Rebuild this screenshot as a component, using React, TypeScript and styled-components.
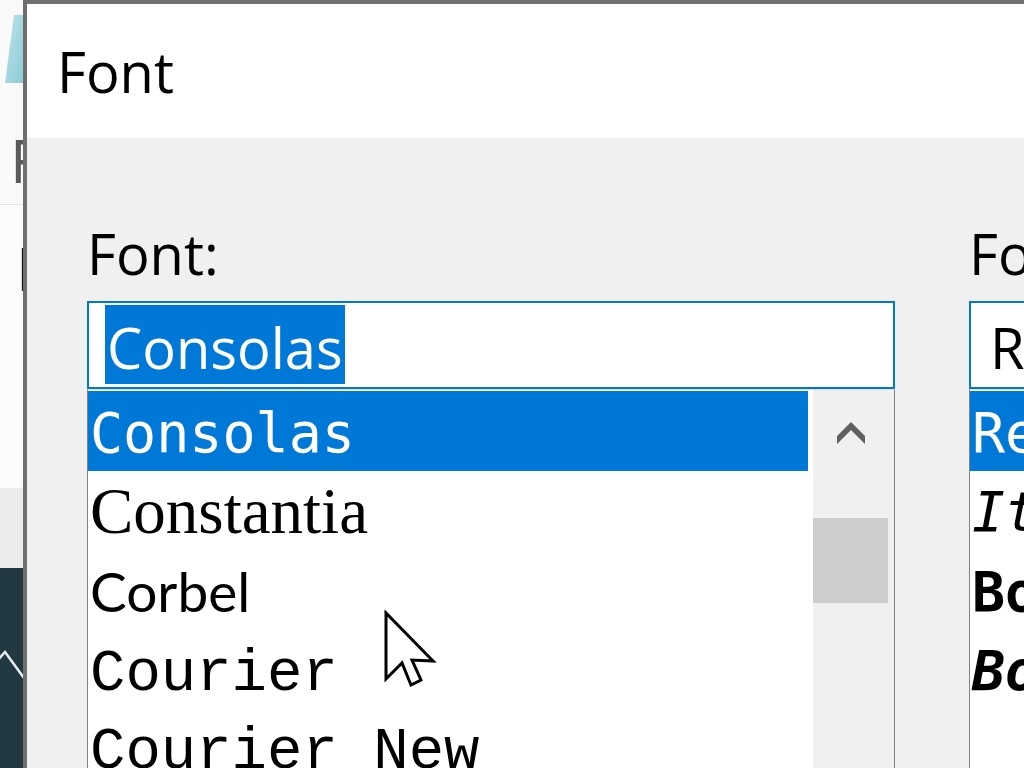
import styled, { createGlobalStyle } from "styled-components";

const GlobalStyle = createGlobalStyle`
    html, body {
        margin: 0;
        padding: 0;
        overflow: hidden;
        background: #ffffff;
    }
`;

const ui = `"Open Sans", "Noto Sans", sans-serif`;
const blue = "#0078d7";

interface FontRow {
    name: string;
    family: string;
    size: number;
    nudge?: number;
    italic?: boolean;
    bold?: boolean;
}

const fonts: FontRow[] = [
    { name: "Consolas", family: `"DejaVu Sans Mono", monospace`, size: 55, nudge: 2 },
    { name: "Constantia", family: `"Liberation Serif", serif`, size: 65 },
    { name: "Corbel", family: `Lato, sans-serif`, size: 55 },
    { name: "Courier", family: `"Liberation Mono", monospace`, size: 59, nudge: 4 },
    { name: "Courier New", family: `"Liberation Mono", monospace`, size: 59, nudge: 2 },
];

const styles: FontRow[] = [
    { name: "Regular", family: `"DejaVu Sans Mono", monospace`, size: 55, nudge: 2 },
    { name: "Italic", family: `"DejaVu Sans Mono", monospace`, size: 55, nudge: 1, italic: true },
    { name: "Bold", family: `"DejaVu Sans Mono", monospace`, size: 55, nudge: 1, bold: true },
    { name: "Bold Italic", family: `"DejaVu Sans Mono", monospace`, size: 55, nudge: 0, bold: true, italic: true },
];

const App = () => {
    return (
        <Screen>
            <GlobalStyle />
            <BackStrip>
                <TopPane>
                    <svg width="23" height="68" viewBox="0 0 23 68">
                        <defs>
                            <linearGradient id="teal" x1="0" y1="0" x2="1" y2="1">
                                <stop offset="0" stopColor="#bfe4ea" />
                                <stop offset="1" stopColor="#8ccbd6" />
                            </linearGradient>
                        </defs>
                        <path d="M14 0 L23 0 L23 68 L5 68 Z" fill="url(#teal)" />
                    </svg>
                    <BackLetter $color="#5a5a5a" $offset={47} $left={10}>F</BackLetter>
                </TopPane>
                <MidPane>
                    <BackLetter $color="#111" $offset={32} $left={16}>D</BackLetter>
                </MidPane>
                <GreyPane />
                <DarkPane>
                    <svg width="23" height="120" viewBox="0 0 23 120">
                        <polyline points="-2,92 5,84 24,110" fill="none" stroke="#e8eef0" strokeWidth="2.5" />
                    </svg>
                </DarkPane>
            </BackStrip>

            <Dialog>
                <TitleBar>Font</TitleBar>
                <Body>
                    <Column $width={808}>
                        <Label>Font:</Label>
                        <Input>
                            <Selection>Consolas</Selection>
                        </Input>
                        <List>
                            <Rows>
                                {fonts.map((f, i) => (
                                    <Row
                                        key={f.name}
                                        $selected={i === 0}
                                        $family={f.family}
                                        $size={f.size}
                                        $nudge={f.nudge ?? 0}
                                    >
                                        {f.name}
                                    </Row>
                                ))}
                            </Rows>
                            <Scrollbar>
                                <ArrowButton>
                                    <svg width="28" height="22" viewBox="0 0 28 22">
                                        <polygon
                                            points="14,0 28,14 28,22 14,8 0,22 0,14"
                                            fill="#606060"
                                        />
                                    </svg>
                                </ArrowButton>
                                <Thumb />
                            </Scrollbar>
                        </List>
                    </Column>
                    <Column $width={420}>
                        <Label>Font style:</Label>
                        <Input>
                            <PlainValue>Regular</PlainValue>
                        </Input>
                        <List>
                            <Rows>
                                {styles.map((s, i) => (
                                    <Row
                                        key={s.name}
                                        $selected={i === 0}
                                        $family={s.family}
                                        $size={s.size}
                                        $nudge={s.nudge ?? 0}
                                        $italic={s.italic}
                                        $bold={s.bold}
                                    >
                                        {s.name}
                                    </Row>
                                ))}
                            </Rows>
                        </List>
                    </Column>
                </Body>
            </Dialog>

            <Cursor width="56" height="82" viewBox="-3 -3 56 82">
                <polygon
                    points="0,0 0,66 16,50 25,72 35,67 26,47 47,48"
                    fill="#ffffff"
                    stroke="#000000"
                    strokeWidth="3"
                    strokeLinejoin="miter"
                />
            </Cursor>
        </Screen>
    );
};

export default App;

const Screen = styled.div`
    position: relative;
    display: flex;
    width: 1024px;
    height: 768px;
    overflow: hidden;
    font-family: ${ui};
`;

const BackStrip = styled.div`
    width: 23px;
    flex-shrink: 0;
    display: flex;
    flex-direction: column;
    overflow: hidden;
`;

const TopPane = styled.div`
    height: 205px;
    flex-shrink: 0;
    background: #fafafa;
    border-bottom: 1px solid #e2e2e2;
    padding-top: 15px;
    box-sizing: border-box;
    overflow: hidden;

    svg {
        display: block;
    }
`;

const BackLetter = styled.div<{ $color: string; $offset: number; $left: number }>`
    font-family: ${ui};
    font-size: 60px;
    line-height: 60px;
    color: ${({ $color }) => $color};
    margin-top: ${({ $offset }) => $offset}px;
    margin-left: ${({ $left }) => $left}px;
    white-space: nowrap;
`;

const MidPane = styled.div`
    height: 283px;
    flex-shrink: 0;
    background: #fbfbfb;
    overflow: hidden;
    padding-top: 1px;
    box-sizing: border-box;
`;

const GreyPane = styled.div`
    height: 80px;
    flex-shrink: 0;
    background: #ebebeb;
`;

const DarkPane = styled.div`
    flex: 1;
    background: #233941;

    svg {
        display: block;
    }
`;

const Dialog = styled.div`
    width: 1300px;
    flex-shrink: 0;
    display: flex;
    flex-direction: column;
    border-top: 4px solid #6f6f6f;
    border-left: 4px solid #6f6f6f;
    background: #f0f0f0;
`;

const TitleBar = styled.div`
    height: 134px;
    flex-shrink: 0;
    box-sizing: border-box;
    background: #ffffff;
    padding: 39px 0 0 30px;
    font-size: 56px;
    line-height: 57px;
    color: #000;
`;

const Body = styled.div`
    flex: 1;
    display: flex;
    gap: 74px;
    padding: 77px 0 0 60px;
    min-height: 0;
`;

const Column = styled.div<{ $width: number }>`
    width: ${({ $width }) => $width}px;
    flex-shrink: 0;
    display: flex;
    flex-direction: column;
    min-height: 0;
`;

const Label = styled.div`
    font-size: 56px;
    line-height: 76px;
    height: 76px;
    margin-bottom: 10px;
    color: #000;
    white-space: nowrap;
`;

const Input = styled.div`
    height: 88px;
    flex-shrink: 0;
    box-sizing: border-box;
    border: 2px solid ${blue};
    background: #ffffff;
    padding: 2px 0 0 16px;
    white-space: nowrap;
    overflow: hidden;
`;

const Selection = styled.span`
    display: inline-block;
    vertical-align: top;
    height: 79px;
    padding: 0 2px;
    background: ${blue};
    color: #ffffff;
    font-size: 56px;
    line-height: 84px;
`;

const PlainValue = styled.span`
    display: inline-block;
    vertical-align: top;
    height: 79px;
    padding: 0 3px;
    color: #000;
    font-size: 56px;
    line-height: 84px;
`;

const List = styled.div`
    flex: 1;
    min-height: 0;
    display: flex;
    border: 1px solid #828282;
    border-top-color: #dcdcdc;
    border-bottom: none;
    background: #ffffff;
    overflow: hidden;
`;

const Rows = styled.div`
    width: 720px;
    flex-shrink: 0;
    padding-top: 1px;
`;

const Row = styled.div<{
    $selected: boolean;
    $family: string;
    $size: number;
    $nudge: number;
    $italic?: boolean;
    $bold?: boolean;
}>`
    height: 80px;
    box-sizing: border-box;
    padding: ${({ $nudge }) => $nudge}px 0 0 2px;
    white-space: nowrap;
    font-family: ${({ $family }) => $family};
    font-size: ${({ $size }) => $size}px;
    line-height: 80px;
    font-style: ${({ $italic }) => ($italic ? "italic" : "normal")};
    font-weight: ${({ $bold }) => ($bold ? 700 : 400)};
    background: ${({ $selected }) => ($selected ? blue : "transparent")};
    color: ${({ $selected }) => ($selected ? "#ffffff" : "#000000")};
`;

const Scrollbar = styled.div`
    width: 81px;
    margin-left: 5px;
    flex-shrink: 0;
    background: #f0f0f0;
    padding-right: 6px;
    box-sizing: border-box;
    display: flex;
    flex-direction: column;
`;

const ArrowButton = styled.div`
    height: 86px;
    display: flex;
    align-items: center;
    justify-content: center;

    svg {
        display: block;
    }
`;

const Thumb = styled.div`
    height: 85px;
    margin-top: 42px;
    background: #cdcdcd;
`;

const Cursor = styled.svg`
    position: absolute;
    left: 383px;
    top: 610px;
    pointer-events: none;
`;
